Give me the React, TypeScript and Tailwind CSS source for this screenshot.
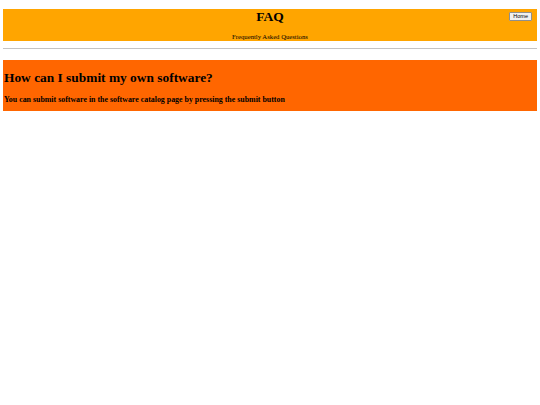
export default function App() {
  return (
    <div className="min-h-[405px] bg-white px-[3px] pt-[9px] font-['Liberation_Serif',serif] text-black">
      <header className="grid h-[32px] grid-cols-[1fr_auto_1fr] bg-[#ffa500]">
        <div />
        <div className="flex flex-col items-center">
          <h1 className="text-[13.5px] font-bold leading-[15px]">FAQ</h1>
          <p className="mt-[9px] text-[6.7px] leading-[8px]">Frequently Asked Questions</p>
        </div>
        <div className="flex justify-end pr-[5px] pt-[3px]">
          <button className="h-[9px] rounded-[1px] border border-[#8f8f8f] bg-[#f0f0f0] px-[3px] font-['Liberation_Sans',sans-serif] text-[5.5px] leading-[7px]">
            Home
          </button>
        </div>
      </header>
      <hr className="mt-[7px] border-t border-[#c4c4c4]" />
      <section className="mt-[11px] h-[51px] bg-[#ff6600] px-[1px] pt-[10px]">
        <h2 className="text-[13.4px] font-bold leading-[16px]">How can I submit my own software?</h2>
        <p className="mt-[9px] text-[7.9px] font-bold leading-[10px]">
          You can submit software in the software catalog page by pressing the submit button
        </p>
      </section>
    </div>
  );
}
